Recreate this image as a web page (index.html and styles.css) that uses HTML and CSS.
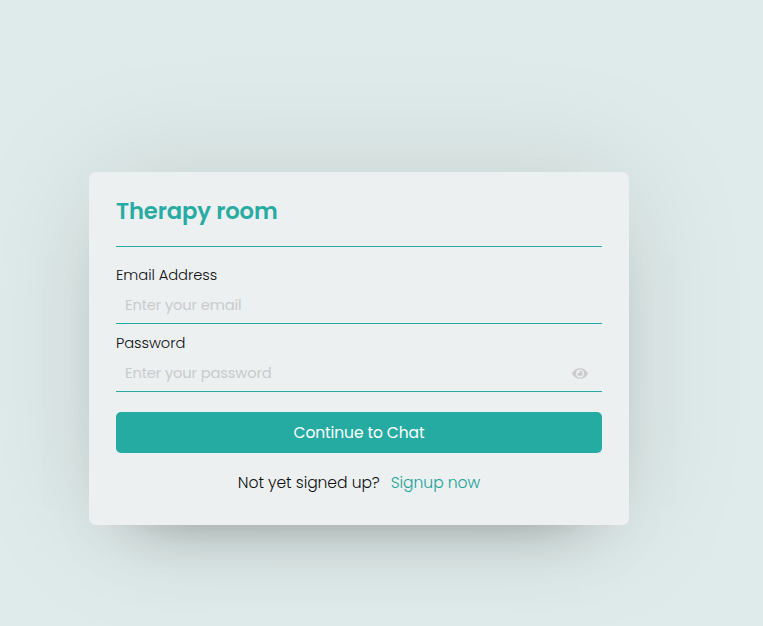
FILE: index.html
```html
<!DOCTYPE html>
<html lang="en">
<head>
<meta charset="utf-8">
<title>Therapy room</title>
<link rel="stylesheet" href="styles.css">
</head>
<body>
<main class="wrapper">
  <h1 class="title">Therapy room</h1>
  <form class="form">
    <div class="field">
      <label for="email">Email Address</label>
      <input id="email" type="text" placeholder="Enter your email">
    </div>
    <div class="field">
      <label for="password">Password</label>
      <div class="control">
        <input id="password" type="password" placeholder="Enter your password">
        <svg class="eye" viewBox="0 0 576 512" aria-hidden="true"><path d="M572.5 241.400C518.300 135.600 410.900 64 288 64S57.700 135.600 3.500 241.400a32.400 32.400 0 0 0 0 29.200C57.700 376.400 165.100 448 288 448s230.300-71.600 284.500-177.400a32.400 32.400 0 0 0 0-29.200zM288 400a144 144 0 1 1 144-144 143.900 143.900 0 0 1-144 144zm0-240a95.300 95.300 0 0 0-25.300 3.800 47.900 47.900 0 0 1-66.900 66.900A95.800 95.800 0 1 0 288 160z"/></svg>
      </div>
    </div>
    <button class="submit" type="button">Continue to Chat</button>
  </form>
  <p class="signup"><span>Not yet signed up?</span><a href="#">Signup now</a></p>
</main>
</body>
</html>
```

FILE: styles.css
```css
* { box-sizing: border-box; margin: 0; padding: 0; }
body {
  height: 626px;
  overflow: hidden;
  background: #dfebea;
  font-family: Poppins, "Open Sans", sans-serif;
  padding: 172px 0 0 89px;
}
.wrapper {
  width: 540px;
  height: 353px;
  padding: 20px 27px;
  background: #ecf0f1;
  border-radius: 7px;
  box-shadow: 0 0 128px rgba(0,0,0,.1), 0 32px 64px -48px rgba(0,0,0,.5);
}
.title {
  height: 55px;
  line-height: 39px;
  font-size: 22.7px;
  font-weight: 600;
  letter-spacing: -.12px;
  color: #27aba2;
  border-bottom: 1px solid #27aba2;
}
.form { padding-top: 16px; }
.field { height: 68px; }
label { display: block; height: 24px; line-height: 25px; font-size: 14.7px; font-weight: 300; letter-spacing: -.06px; color: #111; }
input {
  display: block;
  width: 100%;
  height: 37px;
  padding: 0 9px;
  border: 0;
  border-bottom: 1px solid #27aba2;
  outline: 0;
  background: transparent;
  font: 14.7px/36px Poppins, "Open Sans", sans-serif;
  letter-spacing: -.14px;
}
input::placeholder { color: #c9cbcb; opacity: 1; }
.control { position: relative; }
.eye { position: absolute; right: 14px; top: 11px; width: 16px; height: 15px; fill: #ccc; }
.submit {
  display: block;
  width: 100%;
  height: 41px;
  margin-top: 13px;
  border: 0;
  border-radius: 5px;
  background: #25aba2;
  color: #fff;
  font: 400 15.5px/41px Poppins, "Open Sans", sans-serif;
  letter-spacing: -.1px;
}
.signup { display: flex; justify-content: center; gap: 11px; margin-top: 18px; font-size: 15.6px; line-height: 24px; font-weight: 300; letter-spacing: -.08px; color: #111; }
.signup a { color: #1aa298; text-decoration: none; }
```
